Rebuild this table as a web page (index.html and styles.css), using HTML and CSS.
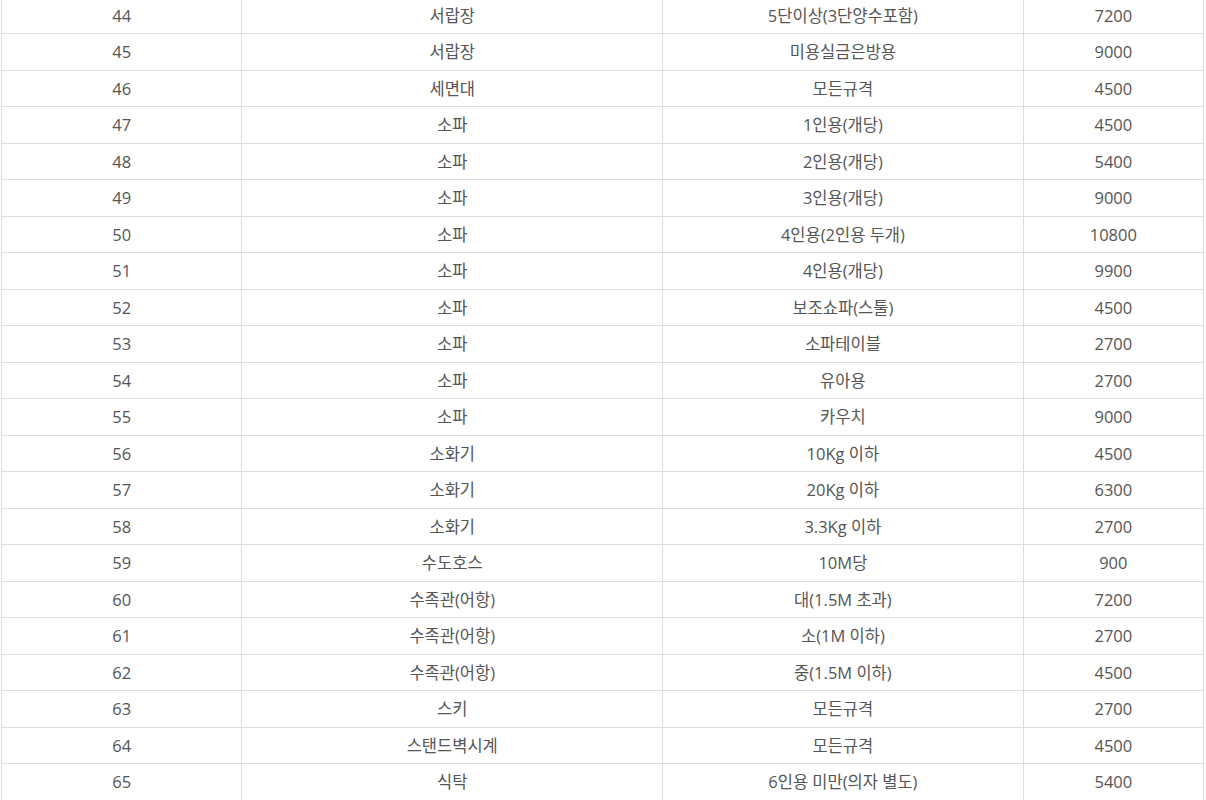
FILE: index.html
```html
<!DOCTYPE html>
<html lang="ko">
<head>
<meta charset="utf-8">
<link rel="stylesheet" href="styles.css">
</head>
<body>
<div class="wrap">
<table class="price">
<colgroup><col class="c1"><col class="c2"><col class="c3"><col class="c4"></colgroup>
<tbody>
<tr><td>44</td><td>서랍장</td><td>5단이상(3단양수포함)</td><td>7200</td></tr>
<tr><td>45</td><td>서랍장</td><td>미용실금은방용</td><td>9000</td></tr>
<tr><td>46</td><td>세면대</td><td>모든규격</td><td>4500</td></tr>
<tr><td>47</td><td>소파</td><td>1인용(개당)</td><td>4500</td></tr>
<tr><td>48</td><td>소파</td><td>2인용(개당)</td><td>5400</td></tr>
<tr><td>49</td><td>소파</td><td>3인용(개당)</td><td>9000</td></tr>
<tr><td>50</td><td>소파</td><td>4인용(2인용 두개)</td><td>10800</td></tr>
<tr><td>51</td><td>소파</td><td>4인용(개당)</td><td>9900</td></tr>
<tr><td>52</td><td>소파</td><td>보조쇼파(스툴)</td><td>4500</td></tr>
<tr><td>53</td><td>소파</td><td>소파테이블</td><td>2700</td></tr>
<tr><td>54</td><td>소파</td><td>유아용</td><td>2700</td></tr>
<tr><td>55</td><td>소파</td><td>카우치</td><td>9000</td></tr>
<tr><td>56</td><td>소화기</td><td>10Kg 이하</td><td>4500</td></tr>
<tr><td>57</td><td>소화기</td><td>20Kg 이하</td><td>6300</td></tr>
<tr><td>58</td><td>소화기</td><td>3.3Kg 이하</td><td>2700</td></tr>
<tr><td>59</td><td>수도호스</td><td>10M당</td><td>900</td></tr>
<tr><td>60</td><td>수족관(어항)</td><td>대(1.5M 초과)</td><td>7200</td></tr>
<tr><td>61</td><td>수족관(어항)</td><td>소(1M 이하)</td><td>2700</td></tr>
<tr><td>62</td><td>수족관(어항)</td><td>중(1.5M 이하)</td><td>4500</td></tr>
<tr><td>63</td><td>스키</td><td>모든규격</td><td>2700</td></tr>
<tr><td>64</td><td>스탠드벽시계</td><td>모든규격</td><td>4500</td></tr>
<tr><td>65</td><td>식탁</td><td>6인용 미만(의자 별도)</td><td>5400</td></tr>
</tbody>
</table>
</div>
</body>
</html>
```
FILE: styles.css
```css
html, body {
  margin: 0;
  padding: 0;
  background: #fff;
}
.wrap {
  padding: 0 2px 0 1px;
  margin-top: -3.5px;
}
.price {
  width: 100%;
  border-collapse: collapse;
  table-layout: fixed;
  font-family: "Open Sans", "Noto Sans CJK KR", sans-serif;
  font-size: 16.5px;
  color: #555;
}
.c1 { width: 20%; }
.c2 { width: 35%; }
.c3 { width: 30%; }
.c4 { width: 15%; }
.price td {
  border: 1px solid #ddd;
  text-align: center;
  padding: 7px 4px;
  line-height: 21.5px;
  height: 21.5px;
  white-space: nowrap;
}
```
